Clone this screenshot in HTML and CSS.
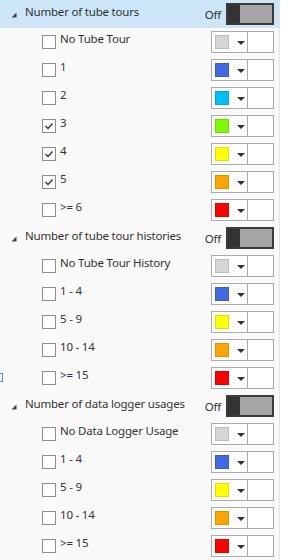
FILE: index.html
```html
<!DOCTYPE html>
<html lang="en">

<head>
    <meta charset="UTF-8">
    <meta name="viewport" content="width=device-width, initial-scale=1.0">
    <title>Legend Filters</title>
    <link rel="stylesheet" href="styles.css">
</head>

<body>

    <div class="panel">

        <!-- Tube tours -->
        <div class="group-head active">
            <svg class="caret" width="6" height="6" viewBox="0 0 6 6"><polygon points="5.5,0.5 5.5,5.5 0.5,5.5" /></svg>
            <div class="group-title">Number of tube tours</div>
            <div class="off">Off</div>
            <div class="toggle"><div class="thumb"></div></div>
        </div>
        <div class="item">
            <div class="check"></div>
            <div class="label">No Tube Tour</div>
            <div class="picker"><div class="swatch c-gray"></div><div class="arrow"></div><div class="extra"></div></div>
        </div>
        <div class="item">
            <div class="check"></div>
            <div class="label">1</div>
            <div class="picker"><div class="swatch c-blue"></div><div class="arrow"></div><div class="extra"></div></div>
        </div>
        <div class="item">
            <div class="check"></div>
            <div class="label">2</div>
            <div class="picker"><div class="swatch c-cyan"></div><div class="arrow"></div><div class="extra"></div></div>
        </div>
        <div class="item">
            <div class="check checked"><svg width="12" height="12" viewBox="0 0 12 12"><polyline points="2.5,6 5,8.5 9.5,3.5" /></svg></div>
            <div class="label">3</div>
            <div class="picker"><div class="swatch c-green"></div><div class="arrow"></div><div class="extra"></div></div>
        </div>
        <div class="item">
            <div class="check checked"><svg width="12" height="12" viewBox="0 0 12 12"><polyline points="2.5,6 5,8.5 9.5,3.5" /></svg></div>
            <div class="label">4</div>
            <div class="picker"><div class="swatch c-yellow"></div><div class="arrow"></div><div class="extra"></div></div>
        </div>
        <div class="item">
            <div class="check checked"><svg width="12" height="12" viewBox="0 0 12 12"><polyline points="2.5,6 5,8.5 9.5,3.5" /></svg></div>
            <div class="label">5</div>
            <div class="picker"><div class="swatch c-orange"></div><div class="arrow"></div><div class="extra"></div></div>
        </div>
        <div class="item">
            <div class="check"></div>
            <div class="label">&gt;= 6</div>
            <div class="picker"><div class="swatch c-red"></div><div class="arrow"></div><div class="extra"></div></div>
        </div>

        <!-- Tube tour histories -->
        <div class="group-head">
            <svg class="caret" width="6" height="6" viewBox="0 0 6 6"><polygon points="5.5,0.5 5.5,5.5 0.5,5.5" /></svg>
            <div class="group-title">Number of tube tour histories</div>
            <div class="off">Off</div>
            <div class="toggle"><div class="thumb"></div></div>
        </div>
        <div class="item">
            <div class="check"></div>
            <div class="label">No Tube Tour History</div>
            <div class="picker"><div class="swatch c-gray"></div><div class="arrow"></div><div class="extra"></div></div>
        </div>
        <div class="item">
            <div class="check"></div>
            <div class="label">1 - 4</div>
            <div class="picker"><div class="swatch c-blue"></div><div class="arrow"></div><div class="extra"></div></div>
        </div>
        <div class="item">
            <div class="check"></div>
            <div class="label">5 - 9</div>
            <div class="picker"><div class="swatch c-yellow"></div><div class="arrow"></div><div class="extra"></div></div>
        </div>
        <div class="item">
            <div class="check"></div>
            <div class="label">10 - 14</div>
            <div class="picker"><div class="swatch c-orange"></div><div class="arrow"></div><div class="extra"></div></div>
        </div>
        <div class="item">
            <div class="focus-mark"></div>
            <div class="check"></div>
            <div class="label">&gt;= 15</div>
            <div class="picker"><div class="swatch c-red"></div><div class="arrow"></div><div class="extra"></div></div>
        </div>

        <!-- Data logger usages -->
        <div class="group-head">
            <svg class="caret" width="6" height="6" viewBox="0 0 6 6"><polygon points="5.5,0.5 5.5,5.5 0.5,5.5" /></svg>
            <div class="group-title">Number of data logger usages</div>
            <div class="off">Off</div>
            <div class="toggle"><div class="thumb"></div></div>
        </div>
        <div class="item">
            <div class="check"></div>
            <div class="label">No Data Logger Usage</div>
            <div class="picker"><div class="swatch c-gray"></div><div class="arrow"></div><div class="extra"></div></div>
        </div>
        <div class="item">
            <div class="check"></div>
            <div class="label">1 - 4</div>
            <div class="picker"><div class="swatch c-blue"></div><div class="arrow"></div><div class="extra"></div></div>
        </div>
        <div class="item">
            <div class="check"></div>
            <div class="label">5 - 9</div>
            <div class="picker"><div class="swatch c-yellow"></div><div class="arrow"></div><div class="extra"></div></div>
        </div>
        <div class="item">
            <div class="check"></div>
            <div class="label">10 - 14</div>
            <div class="picker"><div class="swatch c-orange"></div><div class="arrow"></div><div class="extra"></div></div>
        </div>
        <div class="item">
            <div class="check"></div>
            <div class="label">&gt;= 15</div>
            <div class="picker"><div class="swatch c-red"></div><div class="arrow"></div><div class="extra"></div></div>
        </div>

    </div>

</body>

</html>
```

FILE: styles.css
```css
body {
    margin: 0;
    padding: 0;
    background: #ffffff;
    font-family: "Noto Sans", "Open Sans", sans-serif;
    font-size: 11.5px;
    letter-spacing: -0.2px;
    color: #333333;
    overflow: hidden;
}

.panel {
    width: 280px;
    min-height: 560px;
    background: #f9f9f9;
    border-right: 1px solid #e4e4e4;
    box-sizing: border-box;
}

/* Group header */
.group-head {
    height: 28px;
    display: flex;
    align-items: center;
    padding-left: 11px;
    padding-right: 5px;
}

.group-head.active {
    background: #cce6f7;
}

.caret {
    fill: #444444;
    margin-right: 8px;
    margin-top: 2px;
}

.group-title {
    flex: 1;
    align-self: flex-start;
    padding-top: 4px;
    white-space: nowrap;
}

.off {
    align-self: flex-start;
    padding-top: 7px;
    margin-right: 5px;
}

.toggle {
    width: 48px;
    height: 22px;
    box-sizing: border-box;
    border: 2px solid #3a3a3a;
    background: #a6a6a6;
}

.thumb {
    width: 12px;
    height: 18px;
    background: #333333;
}

/* Item rows */
.item {
    position: relative;
    height: 28px;
    display: flex;
    align-items: center;
    padding-left: 42px;
    padding-right: 5px;
}

.check {
    width: 14px;
    height: 14px;
    box-sizing: border-box;
    border: 1px solid #8e8e8e;
    background: #ffffff;
    display: flex;
    align-items: center;
    justify-content: center;
}

.check svg {
    fill: none;
    stroke: #333333;
    stroke-width: 1.4;
}

.label {
    flex: 1;
    align-self: flex-start;
    padding-top: 3px;
    margin-left: 4px;
    white-space: nowrap;
}

.picker {
    width: 63px;
    height: 22px;
    box-sizing: border-box;
    border: 1px solid #ababab;
    background: #ffffff;
    display: flex;
    align-items: center;
}

.swatch {
    width: 14px;
    height: 14px;
    box-sizing: border-box;
    border: 1px solid rgba(0, 0, 0, 0.12);
    margin-left: 3px;
}

.arrow {
    width: 0;
    height: 0;
    border-left: 4px solid transparent;
    border-right: 4px solid transparent;
    border-top: 4px solid #333333;
    margin-left: 8px;
    margin-top: 2px;
}

.extra {
    margin-left: auto;
    width: 25px;
    height: 100%;
    border-left: 1px solid #ababab;
}

.c-gray { background: #d6d6d6; }
.c-blue { background: #4169e1; }
.c-cyan { background: #00bfff; }
.c-green { background: #7cfc00; }
.c-yellow { background: #ffff00; }
.c-orange { background: #ffa500; }
.c-red { background: #ff0000; }

/* stray focus marker at left edge */
.focus-mark {
    position: absolute;
    left: -4px;
    top: 9px;
    width: 5px;
    height: 7px;
    border: 1px solid #4a90d9;
}
```
